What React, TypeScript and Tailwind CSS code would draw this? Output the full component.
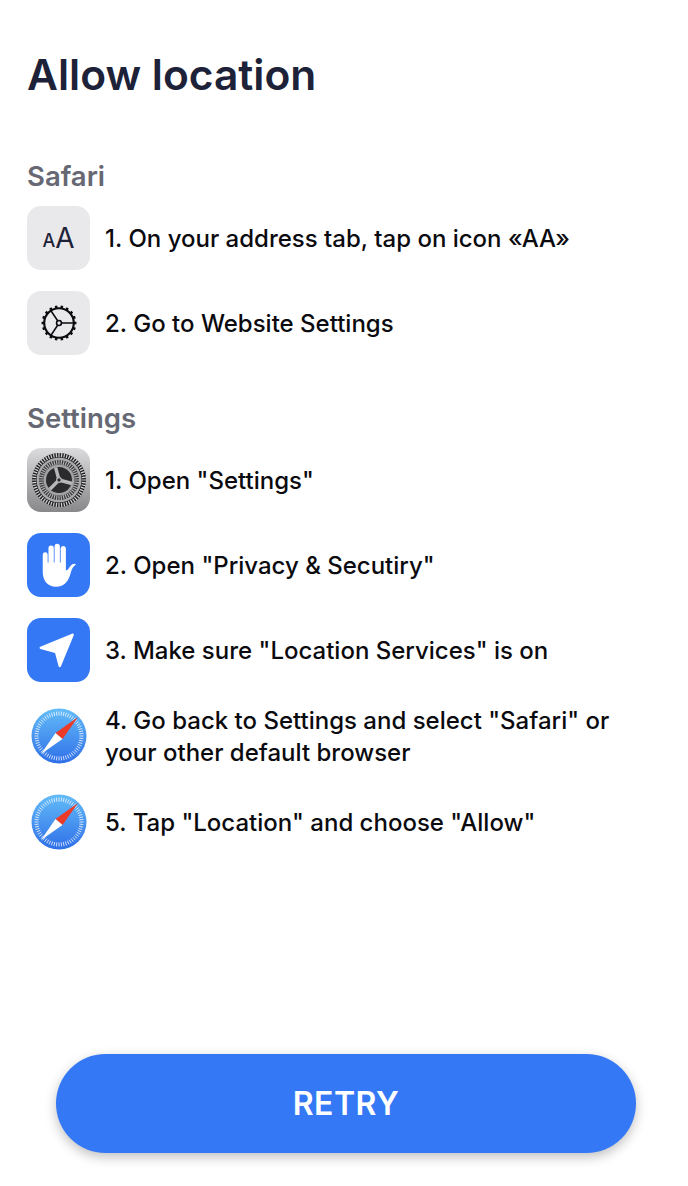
import { ReactNode } from 'react';

const teeth = (n: number, cx: number, cy: number, r1: number, r2: number) =>
  Array.from({ length: n }, (_, i) => {
    const a = (i / n) * Math.PI * 2;
    return `M${(cx + r1 * Math.cos(a)).toFixed(2)} ${(cy + r1 * Math.sin(a)).toFixed(2)}L${(cx + r2 * Math.cos(a)).toFixed(2)} ${(cy + r2 * Math.sin(a)).toFixed(2)}`;
  }).join('');

function GearLine() {
  return (
    <svg width="38" height="38" viewBox="0 0 36 36" fill="none" stroke="#0b0b0f">
      <circle cx="18" cy="18" r="14" strokeWidth="2" />
      <path d={teeth(18, 18, 18, 14, 16.5)} strokeWidth="2.4" />
      <circle cx="18" cy="18" r="2.3" strokeWidth="1.5" />
      <path d="M20.3 18H32M16.8 16L10 5.800M16.800 20L10 30.200" strokeWidth="1.6" />
    </svg>
  );
}

function SettingsIcon() {
  return (
    <div className="w-[63px] h-16 rounded-[14px] bg-gradient-to-b from-[#dcdcde] to-[#88888b] flex items-center justify-center">
      <svg width="56" height="56" viewBox="0 0 56 56" fill="none">
        <circle cx="28" cy="28" r="27" fill="#1f1f21" />
        <path d={teeth(60, 28, 28, 23, 27)} stroke="#d2d2d4" strokeWidth="1.200" />
        <circle cx="28" cy="28" r="22.500" fill="#a9a9ab" />
        <circle cx="28" cy="28" r="20" fill="#38383a" />
        <path d={teeth(48, 28, 28, 15.500, 20)} stroke="#b4b4b6" strokeWidth="1.100" />
        <circle cx="28" cy="28" r="15.500" fill="#a3a3a5" />
        <circle cx="28" cy="28" r="13" fill="#2b2b2d" />
        <path d="M28 28L41 31.500M28 28L18.800 37.200M28 28L24.600 15.400" stroke="#b8b8ba" strokeWidth="3.400" />
        <circle cx="28" cy="28" r="2.300" fill="#2b2b2d" stroke="#b8b8ba" strokeWidth="1.200" />
      </svg>
    </div>
  );
}

function HandIcon() {
  return (
    <div className="w-[63px] h-16 rounded-[14px] bg-[#3478f6] flex items-center justify-center">
      <svg width="64" height="64" viewBox="0 0 64 64" fill="#fff">
        <path
          transform="translate(0 1.500)"
          d="M16 20a2.500 2.500 0 0 1 5 0V28h.8V13.500a2.700 2.700 0 0 1 5.400 0V28h.8V11.500a2.700 2.700 0 0 1 5.400 0V28h.8V13.500a2.700 2.700 0 0 1 5.300 0V35c0 1 1 1.300 1.600.500l3-4c1.500-1.800 3.200-2.400 5-2.100.500.100.600.500.300.800C47.500 31.500 45.500 34 44.500 38 42.500 46.500 38 52.500 29.500 52.500 20.500 52.500 16 46 16 37z"
        />
      </svg>
    </div>
  );
}

function LocationIcon() {
  return (
    <div className="w-[63px] h-16 rounded-[14px] bg-[#3478f6] flex items-center justify-center">
      <svg width="64" height="64" viewBox="0 0 64 64" fill="#fff">
        <path d="M47.500 17 34.500 48.500c-.500 1.200-2 1.200-2.400 0L28.500 35 13.700 31c-1.200-.300-1.300-1.800-.2-2.300L45.700 15.500c1.200-.500 2.300.400 1.800 1.500z" />
      </svg>
    </div>
  );
}

function SafariIcon() {
  return (
    <div className="w-[63px] h-16 flex items-center justify-center">
      <svg width="56" height="56" viewBox="0 0 56 56">
        <defs>
          <linearGradient id="safariBg" x1="0" y1="0" x2="0" y2="1">
            <stop offset="0" stopColor="#63bcf8" />
            <stop offset="1" stopColor="#2f6fe8" />
          </linearGradient>
        </defs>
        <circle cx="28" cy="28" r="27.500" fill="url(#safariBg)" />
        <path d={teeth(60, 28, 28, 20.500, 24.500)} stroke="#ffffff" strokeOpacity="0.75" strokeWidth="1" />
        <path d="M47 9L31.500 31 24.500 25z" fill="#ec3a26" />
        <path d="M10 46L24.500 25 31.500 31z" fill="#ffffff" />
      </svg>
    </div>
  );
}

function Row({ icon, children }: { icon: ReactNode; children: ReactNode }) {
  return (
    <div className="flex items-center gap-[15px]">
      <div className="shrink-0">{icon}</div>
      <p className="text-[24px] leading-[32px] pt-[2px] text-[#0b0b0f] font-[450] whitespace-nowrap">{children}</p>
    </div>
  );
}

export default function App() {
  return (
    <div className="h-[1186px] bg-white pl-[27px] pr-[52px] flex flex-col font-['Inter',sans-serif] overflow-hidden">
      <h1 className="mt-[49px] text-[42.5px] leading-[52px] font-semibold text-[#1d2238] whitespace-nowrap">Allow location</h1>

      <h2 className="mt-[58px] text-[27.500px] leading-[34px] font-semibold text-[#666873]">Safari</h2>
      <div className="mt-[13px] flex flex-col gap-[21px]">
        <Row
          icon={
            <div className="w-[63px] h-16 rounded-[14px] bg-[#e9e9eb] flex items-center justify-center text-[#1d2238]">
              <span className="text-[18px] leading-none mt-[5px] font-medium">A</span>
              <span className="text-[28px] leading-none">A</span>
            </div>
          }
        >
          1. On your address tab, tap on icon «AA»
        </Row>
        <Row
          icon={
            <div className="w-[63px] h-16 rounded-[14px] bg-[#e9e9eb] flex items-center justify-center">
              <GearLine />
            </div>
          }
        >
          2. Go to Website Settings
        </Row>
      </div>

      <h2 className="mt-[46px] text-[27.500px] leading-[34px] font-semibold text-[#666873]">Settings</h2>
      <div className="mt-[13px] flex flex-col gap-[21px]">
        <Row icon={<SettingsIcon />}>1. Open "Settings"</Row>
        <Row icon={<HandIcon />}>2. Open "Privacy &amp; Secutiry"</Row>
        <Row icon={<LocationIcon />}>3. Make sure "Location Services" is on</Row>
        <Row icon={<SafariIcon />}>
          4. Go back to Settings and select "Safari" or
          <br />
          your other default browser
        </Row>
        <Row icon={<SafariIcon />}>5. Tap "Location" and choose "Allow"</Row>
      </div>

      <div className="mt-auto mb-[33px] pl-[29px]">
        <button className="w-full h-[99px] rounded-full bg-[#3478f6] text-white text-[32px] font-semibold tracking-[0.5px] shadow-[0_4px_12px_rgba(0,0,0,0.25)]">
          RETRY
        </button>
      </div>
    </div>
  );
}
